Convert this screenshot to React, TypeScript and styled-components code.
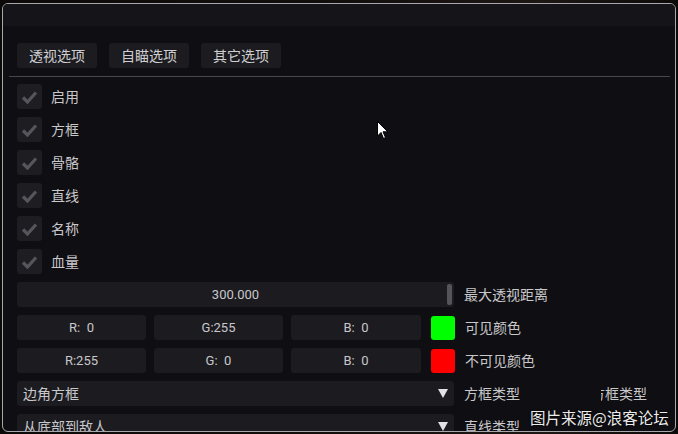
import React from "react";
import styled, { createGlobalStyle } from "styled-components";

const GlobalStyle = createGlobalStyle`
  html, body {
    margin: 0;
    padding: 0;
    background: #0c0a09;
    width: 678px;
    height: 434px;
    overflow: hidden;
  }
  body {
    font-family: "Noto Sans CJK SC", "Roboto", sans-serif;
  }
`;

const Page = styled.div`
  position: relative;
  width: 678px;
  height: 434px;
  padding: 3px 0 0 2px;
  box-sizing: border-box;
  background: linear-gradient(90deg, #0c0a09 0%, #120e0c 50%, #1d1714 80%, #0c0a09 100%);
`;

const Window = styled.div`
  width: 674px;
  height: 429px;
  box-sizing: border-box;
  border: 1px solid #a8a8ac;
  border-radius: 6px;
  background: #0f0e12;
  overflow: hidden;
  display: flex;
  flex-direction: column;
`;

const TitleBar = styled.div`
  height: 22px;
  flex-shrink: 0;
  background: #141419;
`;

const Content = styled.div`
  padding: 17px 5px 0 6px;
  display: flex;
  flex-direction: column;
`;

const TabRow = styled.div`
  display: flex;
  gap: 12px;
  padding-left: 8px;
`;

const Tab = styled.div`
  width: 80px;
  height: 25px;
  border-radius: 3px;
  background: #1c1b20;
  color: #cfcfd2;
  font-size: 14px;
  line-height: 25px;
  text-align: center;
`;

const Separator = styled.div`
  height: 1px;
  background: #48474d;
  margin: 8px 0 7px 0;
`;

const Rows = styled.div`
  display: flex;
  flex-direction: column;
  gap: 8px;
  padding-left: 8px;
`;

const Row = styled.div`
  display: flex;
  align-items: center;
  height: 25px;
  gap: 10px;
`;

const CheckBox = styled.div`
  width: 25px;
  height: 25px;
  border-radius: 3px;
  background: #1e1d22;
  display: flex;
  align-items: center;
  justify-content: center;
`;

const Label = styled.span`
  color: #c8c8cb;
  font-size: 14px;
  line-height: 25px;
  white-space: nowrap;
`;

const CheckLabel = styled(Label)`
  margin-left: -1px;
`;

const Frame = styled.div<{ $w?: number }>`
  height: 25px;
  width: ${(p) => (p.$w ? `${p.$w}px` : "437px")};
  flex-shrink: 0;
  box-sizing: border-box;
  border-radius: 3px;
  background: #1c1b20;
  color: #c8c8cb;
  font-family: "Roboto", "Liberation Sans", sans-serif;
  font-size: 13px;
  line-height: 25px;
  position: relative;
  white-space: pre;
`;

const SliderFrame = styled(Frame)`
  text-align: center;
`;

const Grab = styled.div`
  position: absolute;
  right: 2px;
  top: 2px;
  width: 5px;
  height: 21px;
  border-radius: 2px;
  background: #55545b;
`;

const ColorInputs = styled.div`
  display: flex;
  gap: 8px;
`;

const NumberBox = styled(Frame)`
  text-align: center;
`;

const Swatch = styled.div<{ $color: string }>`
  width: 24px;
  height: 24px;
  border-radius: 3px;
  background: ${(p) => p.$color};
`;

const Combo = styled(Frame)`
  font-family: "Noto Sans CJK SC", sans-serif;
  font-size: 14px;
  padding-left: 6px;
  display: flex;
  align-items: center;
  justify-content: space-between;
  padding-right: 6px;
`;

const Arrow = styled.div`
  width: 0;
  height: 0;
  border-left: 5px solid transparent;
  border-right: 5px solid transparent;
  border-top: 9px solid #e2e2e4;
`;

const ClipLabel = styled.div`
  margin-left: 71px;
  width: 60px;
  overflow: hidden;
  display: flex;
`;

const ClipInner = styled(Label)`
  margin-left: -10px;
`;

const Cursor = styled.svg`
  position: absolute;
  left: 377px;
  top: 121px;
`;

const Watermark = styled.div`
  position: absolute;
  left: 530px;
  top: 406px;
  color: #ececec;
  font-size: 15.5px;
  line-height: 22px;
  text-shadow: 0 0 2px #000;
  white-space: nowrap;
`;

function Check() {
  return (
    <svg width="17" height="14" viewBox="0 0 17 14">
      <path d="M2 7.5 L6.5 12 L15 2.5" fill="none" stroke="#56555c" strokeWidth="3.2" />
    </svg>
  );
}

const checks = ["启用", "方框", "骨骼", "直线", "名称", "血量"];

export default function App() {
  return (
    <>
      <GlobalStyle />
      <Page>
        <Window>
          <TitleBar />
          <Content>
            <TabRow>
              <Tab>透视选项</Tab>
              <Tab>自瞄选项</Tab>
              <Tab>其它选项</Tab>
            </TabRow>
            <Separator />
            <Rows>
              {checks.map((c) => (
                <Row key={c}>
                  <CheckBox>
                    <Check />
                  </CheckBox>
                  <CheckLabel>{c}</CheckLabel>
                </Row>
              ))}
              <Row>
                <SliderFrame>
                  300.000
                  <Grab />
                </SliderFrame>
                <Label>最大透视距离</Label>
              </Row>
              <Row>
                <ColorInputs>
                  <NumberBox $w={129}>R:  0</NumberBox>
                  <NumberBox $w={129}>G:255</NumberBox>
                  <NumberBox $w={130}>B:  0</NumberBox>
                </ColorInputs>
                <Swatch $color="#00ff00" />
                <Label>可见颜色</Label>
              </Row>
              <Row>
                <ColorInputs>
                  <NumberBox $w={129}>R:255</NumberBox>
                  <NumberBox $w={129}>G:  0</NumberBox>
                  <NumberBox $w={130}>B:  0</NumberBox>
                </ColorInputs>
                <Swatch $color="#ff0000" />
                <Label>不可见颜色</Label>
              </Row>
              <Row>
                <Combo>
                  边角方框
                  <Arrow />
                </Combo>
                <Label>方框类型</Label>
                <ClipLabel>
                  <ClipInner>方框类型</ClipInner>
                </ClipLabel>
              </Row>
              <Row>
                <Combo>
                  从底部到敌人
                  <Arrow />
                </Combo>
                <Label>直线类型</Label>
              </Row>
            </Rows>
          </Content>
        </Window>
        <Cursor width="12" height="19" viewBox="0 0 12 19">
          <path d="M0.5 0.5 L0.5 15 L4 11.5 L6.5 17.5 L8.5 16.5 L6 10.8 L10.8 10.8 Z" fill="#ffffff" stroke="#000" strokeWidth="1" />
        </Cursor>
        <Watermark>图片来源@浪客论坛</Watermark>
      </Page>
    </>
  );
}
